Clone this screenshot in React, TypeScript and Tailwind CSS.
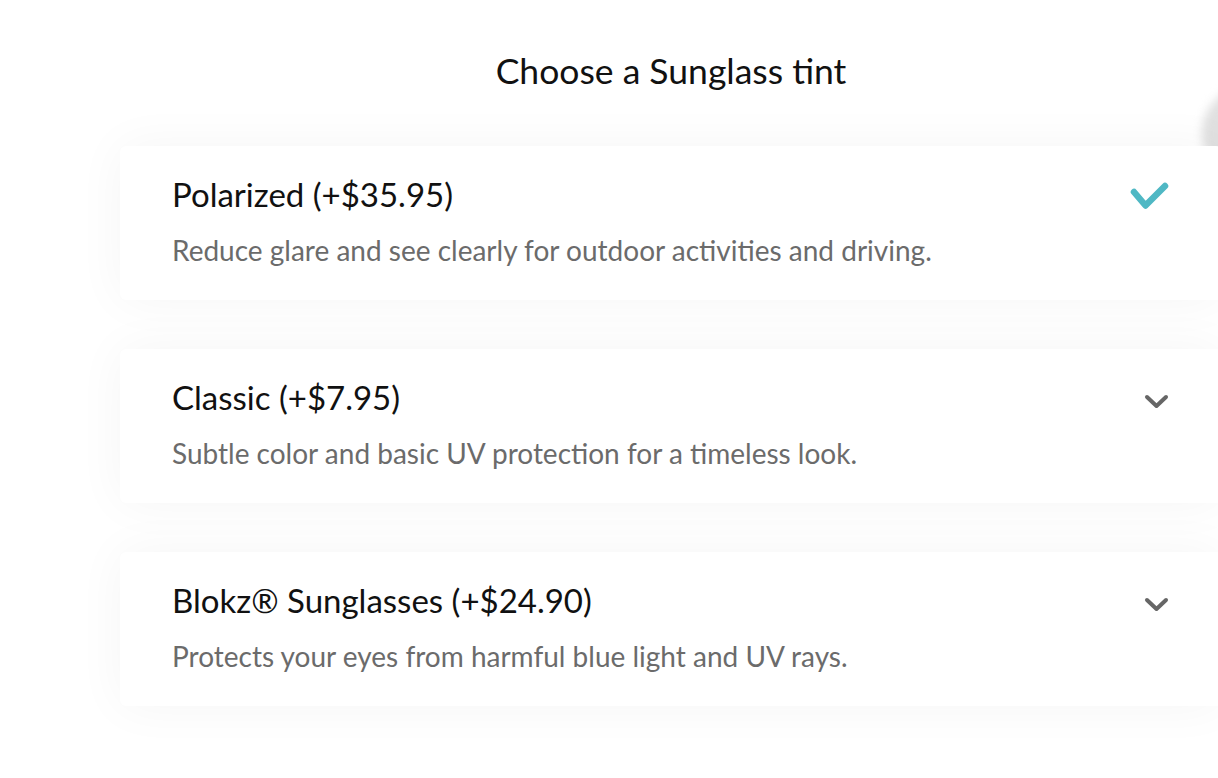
type Tint = {
  name: string;
  price: string;
  desc: string;
  selected?: boolean;
};

const TINTS: Tint[] = [
  { name: "Polarized", price: "+$35.95", desc: "Reduce glare and see clearly for outdoor activities and driving.", selected: true },
  { name: "Classic", price: "+$7.95", desc: "Subtle color and basic UV protection for a timeless look." },
  { name: "Blokz® Sunglasses", price: "+$24.90", desc: "Protects your eyes from harmful blue light and UV rays." },
];

function CheckMark() {
  return (
    <svg width="40" height="34" viewBox="0 0 40 34" className="mt-[33px]">
      <path d="M4 13 L15.5 26.5 L35 7" fill="none" stroke="#4fb8c4" strokeWidth="6.5" strokeLinecap="round" strokeLinejoin="round" />
    </svg>
  );
}

function Chevron() {
  return (
    <svg width="26" height="18" viewBox="0 0 26 18" className="mt-[45px]">
      <path d="M3 3 L12.5 12 L22 3" fill="none" stroke="#666" strokeWidth="4" strokeLinecap="round" strokeLinejoin="round" />
    </svg>
  );
}

export default function App() {
  return (
    <div className="relative h-[778px] w-[1218px] overflow-hidden bg-white font-['Lato','Noto_Sans',sans-serif]">
      {/* blurred blob peeking from the right edge */}
      <div className="absolute left-[1202px] top-[86px] h-[95px] w-[95px] rounded-full bg-[#e0e0e0] blur-[5px]" />

      <div className="ml-[120px] w-[1102px] pt-[49px]">
        <h1 className="text-center text-[35.5px] leading-[44px] text-[#111]">Choose a Sunglass tint</h1>

        <div className="mt-[53px] flex flex-col gap-[49px]">
          {TINTS.map((t) => (
            <div
              key={t.name}
              className="relative flex h-[154px] items-start justify-between rounded-[6px] bg-white pl-[52px] pr-[52px] shadow-[0_0_50px_rgba(0,0,0,0.045)]"
            >
              <div className="pt-[28px]">
                <div className="text-[33px] leading-[40px] text-[#111]">
                  {t.name} ({t.price})
                </div>
                <div className="mt-[19px] text-[28px] leading-[34px] text-[#6b6b6b]">{t.desc}</div>
              </div>
              {t.selected ? <CheckMark /> : <Chevron />}
            </div>
          ))}
        </div>
      </div>
    </div>
  );
}
